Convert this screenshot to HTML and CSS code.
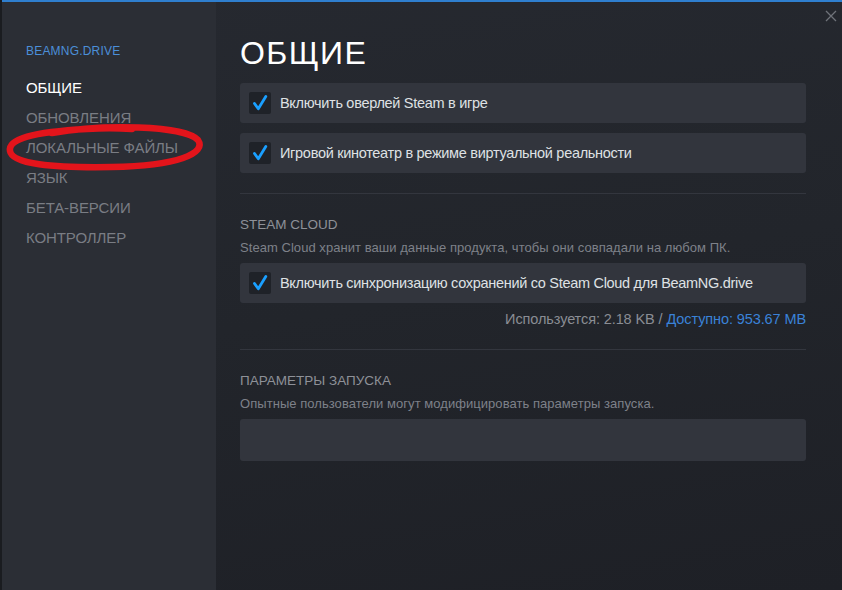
FILE: index.html
```html
<!DOCTYPE html>
<html lang="ru">
<head>
<meta charset="utf-8">
<title>BeamNG.drive — Свойства</title>
<link rel="stylesheet" href="styles.css">
</head>
<body>
<div class="window">
  <aside class="sidebar">
    <div class="game-title">BEAMNG.DRIVE</div>
    <nav class="nav">
      <div class="nav-item active">ОБЩИЕ</div>
      <div class="nav-item">ОБНОВЛЕНИЯ</div>
      <div class="nav-item">ЛОКАЛЬНЫЕ ФАЙЛЫ</div>
      <div class="nav-item">ЯЗЫК</div>
      <div class="nav-item">БЕТА-ВЕРСИИ</div>
      <div class="nav-item">КОНТРОЛЛЕР</div>
    </nav>
  </aside>
  <main class="content">
    <h1 class="page-title">ОБЩИЕ</h1>
    <div class="option">
      <span class="checkbox"><svg viewBox="0 0 22 22" width="22" height="22"><path d="M5.5 11.5 L9.3 16.8 L16.8 4.5" fill="none" stroke="#1a9fff" stroke-width="2.8" stroke-linecap="round" stroke-linejoin="round"/></svg></span>
      <span class="option-label">Включить оверлей Steam в игре</span>
    </div>
    <div class="option">
      <span class="checkbox"><svg viewBox="0 0 22 22" width="22" height="22"><path d="M5.5 11.5 L9.3 16.8 L16.8 4.5" fill="none" stroke="#1a9fff" stroke-width="2.8" stroke-linecap="round" stroke-linejoin="round"/></svg></span>
      <span class="option-label">Игровой кинотеатр в режиме виртуальной реальности</span>
    </div>
    <div class="divider first"></div>
    <h2 class="section-title">STEAM CLOUD</h2>
    <p class="section-desc">Steam Cloud хранит ваши данные продукта, чтобы они совпадали на любом ПК.</p>
    <div class="option">
      <span class="checkbox"><svg viewBox="0 0 22 22" width="22" height="22"><path d="M5.5 11.5 L9.3 16.8 L16.8 4.5" fill="none" stroke="#1a9fff" stroke-width="2.8" stroke-linecap="round" stroke-linejoin="round"/></svg></span>
      <span class="option-label">Включить синхронизацию сохранений со Steam Cloud для BeamNG.drive</span>
    </div>
    <div class="usage">Используется: 2.18 KB / <span class="avail">Доступно: 953.67 MB</span></div>
    <div class="divider second"></div>
    <h2 class="section-title">ПАРАМЕТРЫ ЗАПУСКА</h2>
    <p class="section-desc">Опытные пользователи могут модифицировать параметры запуска.</p>
    <div class="launch-input"></div>
  </main>
  <div class="close">
    <svg viewBox="0 0 12 12" width="12" height="12"><path d="M1 1 L11 11 M11 1 L1 11" stroke="#6f737a" stroke-width="1.3"/></svg>
  </div>
  <svg class="annotation" viewBox="0 0 210 60" width="210" height="60">
    <path d="M50 14 C100 5 182 6 196 21 C205 34 176 47 110 48 C50 49 10 45 8 32 C6 20 30 13 85 10 C100 9 115 9 130 10" fill="none" stroke="#e3141b" stroke-width="6.5" stroke-linecap="round"/>
  </svg>
</div>
</body>
</html>
```
FILE: styles.css
```css
* { box-sizing: border-box; }
html, body {
  margin: 0;
  padding: 0;
  height: 100%;
}
body {
  background: #1a1c20;
  font-family: "Liberation Sans", Arial, sans-serif;
  overflow: hidden;
}
.window {
  position: relative;
  display: flex;
  height: 590px;
  margin-left: 2px;
  border-top: 2px solid #2f7fcf;
  background: linear-gradient(170deg, #262930 0%, #22252b 50%, #1e2026 100%);
}
.sidebar {
  width: 214px;
  flex: none;
  background: #2b2e35;
  padding: 42px 0 0 24px;
}
.game-title {
  color: #4b8fd9;
  font-size: 12px;
  letter-spacing: 0.2px;
  margin-bottom: 15px;
}
.nav {
  display: flex;
  flex-direction: column;
}
.nav-item {
  color: #7a7d84;
  font-size: 15px;
  line-height: 30px;
  height: 30px;
  letter-spacing: -0.1px;
}
.nav-item.active {
  color: #ffffff;
}
.content {
  flex: 1;
  padding: 33px 36px 0 24px;
  display: flex;
  flex-direction: column;
}
.page-title {
  margin: 0 0 12px 0;
  color: #ffffff;
  font-weight: normal;
  font-size: 32px;
  letter-spacing: 1.4px;
  line-height: 36px;
}
.option {
  display: flex;
  align-items: center;
  height: 40px;
  background: #32353d;
  border-radius: 3px;
  padding-left: 9px;
  margin-bottom: 10px;
}
.checkbox {
  width: 22px;
  height: 22px;
  background: #1f2228;
  border-radius: 2px;
  display: flex;
  align-items: center;
  justify-content: center;
  margin-right: 9px;
}
.checkbox svg {
  display: block;
}
.option-label {
  color: #dfe1e4;
  font-size: 14.5px;
  letter-spacing: -0.3px;
}
.divider {
  height: 1px;
  background: #33363e;
}
.divider.first {
  margin-top: 10px;
  margin-bottom: 22px;
}
.section-title {
  margin: 0;
  color: #8e9198;
  font-weight: normal;
  font-size: 13.5px;
  line-height: 18px;
}
.section-desc {
  margin: 5px 0 7px 0;
  color: #7e8189;
  font-size: 13px;
  letter-spacing: 0.05px;
  line-height: 17px;
}
.usage {
  margin-top: -3px;
  text-align: right;
  color: #8a8d94;
  font-size: 14.5px;
  letter-spacing: -0.1px;
  line-height: 18px;
}
.usage .avail {
  color: #3a82d8;
}
.divider.second {
  margin-top: 21px;
  margin-bottom: 22px;
}
.launch-input {
  height: 42px;
  background: #32353d;
  border-radius: 3px;
}
.close {
  position: absolute;
  top: 6px;
  right: 5px;
}
.annotation {
  position: absolute;
  left: 0;
  top: 117px;
}
```
